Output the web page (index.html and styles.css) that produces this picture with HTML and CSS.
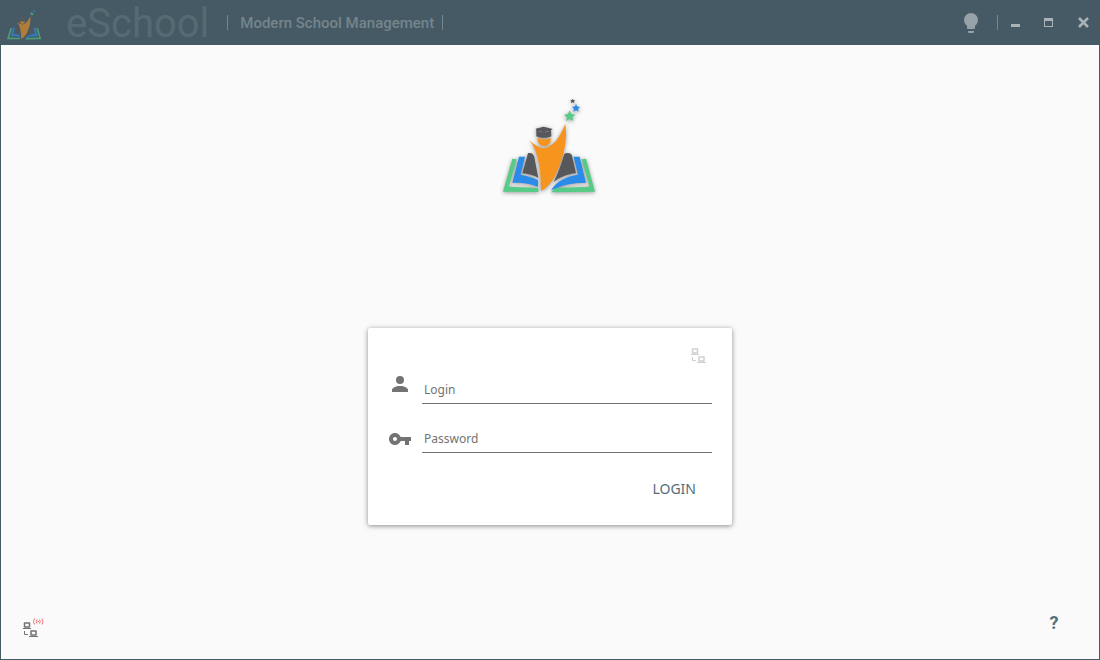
FILE: index.html
```html
<!DOCTYPE html>
<html lang="en">
<head>
  <meta charset="UTF-8">
  <meta name="viewport" content="width=device-width, initial-scale=1.0">
  <title>eSchool</title>
  <link rel="stylesheet" href="styles.css">
</head>
<body>

<!-- shared shapes -->
<svg class="sprite" aria-hidden="true">
  <symbol id="logo" viewBox="0 0 330 330" preserveAspectRatio="none">
    <g class="logo-green">
      <path d="M52 206 L65 208 L41 290 L130 294 L130 306 L24 305 Z"/>
      <path d="M260 208 L273 206 L300 305 L168 307 L182 294 L284 290 Z"/>
      <path d="M224 61 L229 72 L241 74 L232 82 L235 93 L224 87 L213 93 L216 82 L207 74 L219 72 Z"/>
    </g>
    <g class="logo-blue">
      <path d="M72 200 L90 200 L77 254 C95 257 116 263 129 270 L129 291 C105 281 78 277 52 279 Z"/>
      <path d="M236 200 L254 200 L273 279 C238 277 204 284 168 301 C184 274 216 258 249 254 Z"/>
      <path d="M243 41 L246 49 L255 51 L249 57 L251 65 L243 61 L235 65 L237 57 L231 51 L240 49 Z"/>
    </g>
    <g class="logo-dark">
      <path d="M99 190 C110 187 116 193 118 202 L130 264 C116 256 99 251 82 250 Z"/>
      <path d="M208 192 C217 186 229 189 231 197 L243 250 C218 252 195 261 176 276 C190 250 199 221 208 192 Z"/>
      <path d="M122 116 L146 110 L173 117 L168 121 L169 139 C155 145 138 145 124 139 L124 121 Z"/>
      <path d="M233 26 L235 30 L240 31 L237 35 L238 40 L233 37 L228 40 L229 35 L226 31 L231 30 Z"/>
    </g>
    <g class="logo-orange">
      <path d="M128 144 C140 149 155 149 167 144 C169 158 160 168 148 168 C135 168 126 158 128 144 Z"/>
      <path d="M102 150 C116 162 130 173 147 175 C174 170 195 143 211 101 C216 140 211 177 197 216 C183 254 170 286 138 303 C137 270 138 243 128 204 C122 181 116 167 102 150 Z"/>
    </g>
    <path class="logo-line" d="M131 124 L142 126 M150 126 L162 124"/>
  </symbol>

  <symbol id="network" viewBox="0 0 16 16">
    <path d="M2.5 1h5v4h-5zM9 9h5v4H9z" fill="none" stroke="currentColor" stroke-width="1.5" stroke-linejoin="round"/>
    <path d="M1 6h8v1H1zM7 14h9v1H7z" fill="currentColor"/>
    <path d="M2.5 9v3.5h3.5" fill="none" stroke="currentColor"/>
  </symbol>
</svg>

<div class="window">
  <header class="titlebar">
    <svg class="titlebar-logo" aria-hidden="true"><use href="#logo"/></svg>
    <h1 class="brand">eSchool</h1>
    <span class="divider"></span>
    <span class="tagline">Modern School Management</span>
    <span class="divider"></span>

    <div class="controls">
      <button class="theme-btn" type="button" aria-label="Theme">
        <svg width="24" height="24" viewBox="0 0 24 24"><path fill="currentColor" d="M12 2A7 7 0 0 0 5 9C5 11.38 6.19 13.47 8 14.74V17A1 1 0 0 0 9 18H15A1 1 0 0 0 16 17V14.74C17.81 13.47 19 11.38 19 9A7 7 0 0 0 12 2M9 21A1 1 0 0 0 10 22H14A1 1 0 0 0 15 21V20H9V21Z"/></svg>
      </button>
      <span class="divider"></span>
      <button class="window-btn" type="button" aria-label="Minimize">
        <svg width="11" height="11" viewBox="0 0 11 11"><path fill="currentColor" d="M1 7h9v3H1z"/></svg>
      </button>
      <button class="window-btn" type="button" aria-label="Maximize">
        <svg width="11" height="11" viewBox="0 0 11 11"><path fill="currentColor" fill-rule="evenodd" d="M0 1h9v9H0zM1 4v5h7V4z"/></svg>
      </button>
      <button class="window-btn" type="button" aria-label="Close">
        <svg width="11" height="11" viewBox="0 0 11 11"><path stroke="currentColor" stroke-width="2.6" d="M1 1l9 9M10 1l-9 9"/></svg>
      </button>
    </div>
  </header>

  <main class="content">
    <svg class="logo" role="img" aria-label="eSchool logo"><use href="#logo"/></svg>

    <form class="card">
      <button class="network-btn" type="button" aria-label="Connection settings">
        <svg width="16" height="16"><use href="#network"/></svg>
      </button>

      <div class="field field-user">
        <label for="login" aria-label="Login">
          <svg width="24" height="24" viewBox="0 0 24 24"><path fill="currentColor" d="M12 4A4 4 0 0 1 16 8A4 4 0 0 1 12 12A4 4 0 0 1 8 8A4 4 0 0 1 12 4M12 14C16.42 14 20 15.79 20 18V20H4V18C4 15.79 7.58 14 12 14Z"/></svg>
        </label>
        <input id="login" type="text" placeholder="Login">
      </div>

      <div class="field">
        <label for="password" aria-label="Password">
          <svg width="24" height="24" viewBox="0 0 24 24"><path fill="currentColor" d="M12.65 10C11.83 7.67 9.61 6 7 6C3.69 6 1 8.69 1 12S3.69 18 7 18C9.61 18 11.83 16.33 12.65 14H17V18H21V14H23V10H12.65M7 14C5.9 14 5 13.1 5 12S5.9 10 7 10 9 10.9 9 12 8.1 14 7 14Z"/></svg>
        </label>
        <input id="password" type="password" placeholder="Password">
      </div>

      <button class="login-btn" type="submit">LOGIN</button>
    </form>
  </main>

  <footer class="statusbar">
    <svg class="status" width="22" height="22" viewBox="0 0 22 22" role="img" aria-label="Connection status">
      <use href="#network" y="5" width="16" height="16"/>
      <g class="signal">
        <path d="M12.5 1.5Q10.5 4.5 12.5 7.5M15 2.5Q13.5 4.5 15 6.5M20 1.5Q22 4.5 20 7.5M17.5 2.5Q19 4.5 17.5 6.5M15.5 4.5h1.5"/>
      </g>
    </svg>
    <button class="help-btn" type="button" aria-label="Help">?</button>
  </footer>
</div>

</body>
</html>
```
FILE: styles.css
```css
* {
  box-sizing: border-box;
}

body {
  margin: 0;
  font-family: 'Noto Sans', sans-serif;
  background: #fafafa;
}

button {
  display: flex;
  align-items: center;
  justify-content: center;
  padding: 0;
  border: none;
  background: none;
  color: inherit;
  font-family: inherit;
  cursor: pointer;
}

svg {
  display: block;
}

.sprite {
  position: absolute;
  width: 0;
  height: 0;
}

.window {
  display: flex;
  flex-direction: column;
  min-height: 100vh;
  border: 1px solid #455a64;
  border-top: none;
}

/* title bar */
.titlebar {
  display: flex;
  align-items: center;
  height: 45px;
  margin: 0 -1px;
  padding-left: 4px;
  background: #455a64;
  color: #75858d;
  font-family: Roboto, sans-serif;
}

.titlebar-logo {
  width: 41px;
  height: 37px;
  margin: 2px 21px 0 0;
  opacity: 0.6;
}

.brand {
  margin: 0 18px 0 0;
  padding-top: 2px;
  font-size: 40px;
  font-weight: 400;
  line-height: 43px;
  color: #566a73;
}

.divider {
  width: 1px;
  height: 15px;
  background: #75858d;
}

.tagline {
  margin: 0 8px 0 12px;
  font-size: 15px;
  font-weight: 500;
}

.controls {
  display: flex;
  align-items: center;
  margin-left: auto;
  color: #a8b2b7;
}

.theme-btn {
  margin-right: 14px;
  color: #96a2a8;
}

.window-btn {
  width: 34px;
  height: 45px;
}

/* logo */
.logo-green { fill: #55cb85; }
.logo-blue { fill: #2a8ce8; }
.logo-dark { fill: #57585b; }
.logo-orange { fill: #f7941e; }

.logo-line {
  fill: none;
  stroke: #8a8b8d;
  stroke-width: 2;
}

.logo {
  width: 110px;
  height: 110px;
  margin-bottom: 128px;
  filter: drop-shadow(0 1px 2px rgba(0, 0, 0, 0.4));
}

/* login card */
.content {
  display: flex;
  flex: 1;
  flex-direction: column;
  align-items: center;
  padding: 45px 16px 16px;
}

.card {
  display: flex;
  flex-direction: column;
  width: 100%;
  max-width: 364px;
  padding: 20px 20px 18px;
  border-radius: 2px;
  background: #fff;
  box-shadow: 0 1px 5px rgba(0, 0, 0, 0.45);
}

.network-btn {
  align-self: flex-end;
  margin: 0 6px 8px 0;
  color: #d0d0d0;
}

.field {
  display: flex;
  align-items: center;
  gap: 10px;
  height: 28px;
  margin-bottom: 18px;
  color: #737373;
}

.field-user {
  align-items: flex-start;
  height: 32px;
  margin-bottom: 21px;
}

.field input {
  flex: 1;
  align-self: flex-end;
  min-width: 0;
  height: 28px;
  padding: 0 2px 1px;
  border: none;
  border-bottom: 1px solid #737373;
  outline: none;
  background: none;
  color: #333;
  font-family: inherit;
  font-size: 12px;
}

.field input::placeholder {
  color: #737373;
  opacity: 1;
}

.login-btn {
  align-self: flex-end;
  height: 36px;
  padding: 0 16px 2px;
  color: #546e7a;
  font-size: 14px;
}

/* bottom bar */
.statusbar {
  display: flex;
  align-items: flex-start;
  justify-content: space-between;
  height: 48px;
  padding: 0 40px 0 21px;
}

.status {
  margin-top: 6px;
  color: #737373;
}

.signal {
  fill: none;
  stroke: #ef7070;
}

.help-btn {
  width: 10px;
  height: 22px;
  color: #546e7a;
  font-family: Roboto, sans-serif;
  font-size: 18px;
  font-weight: 700;
}
```
